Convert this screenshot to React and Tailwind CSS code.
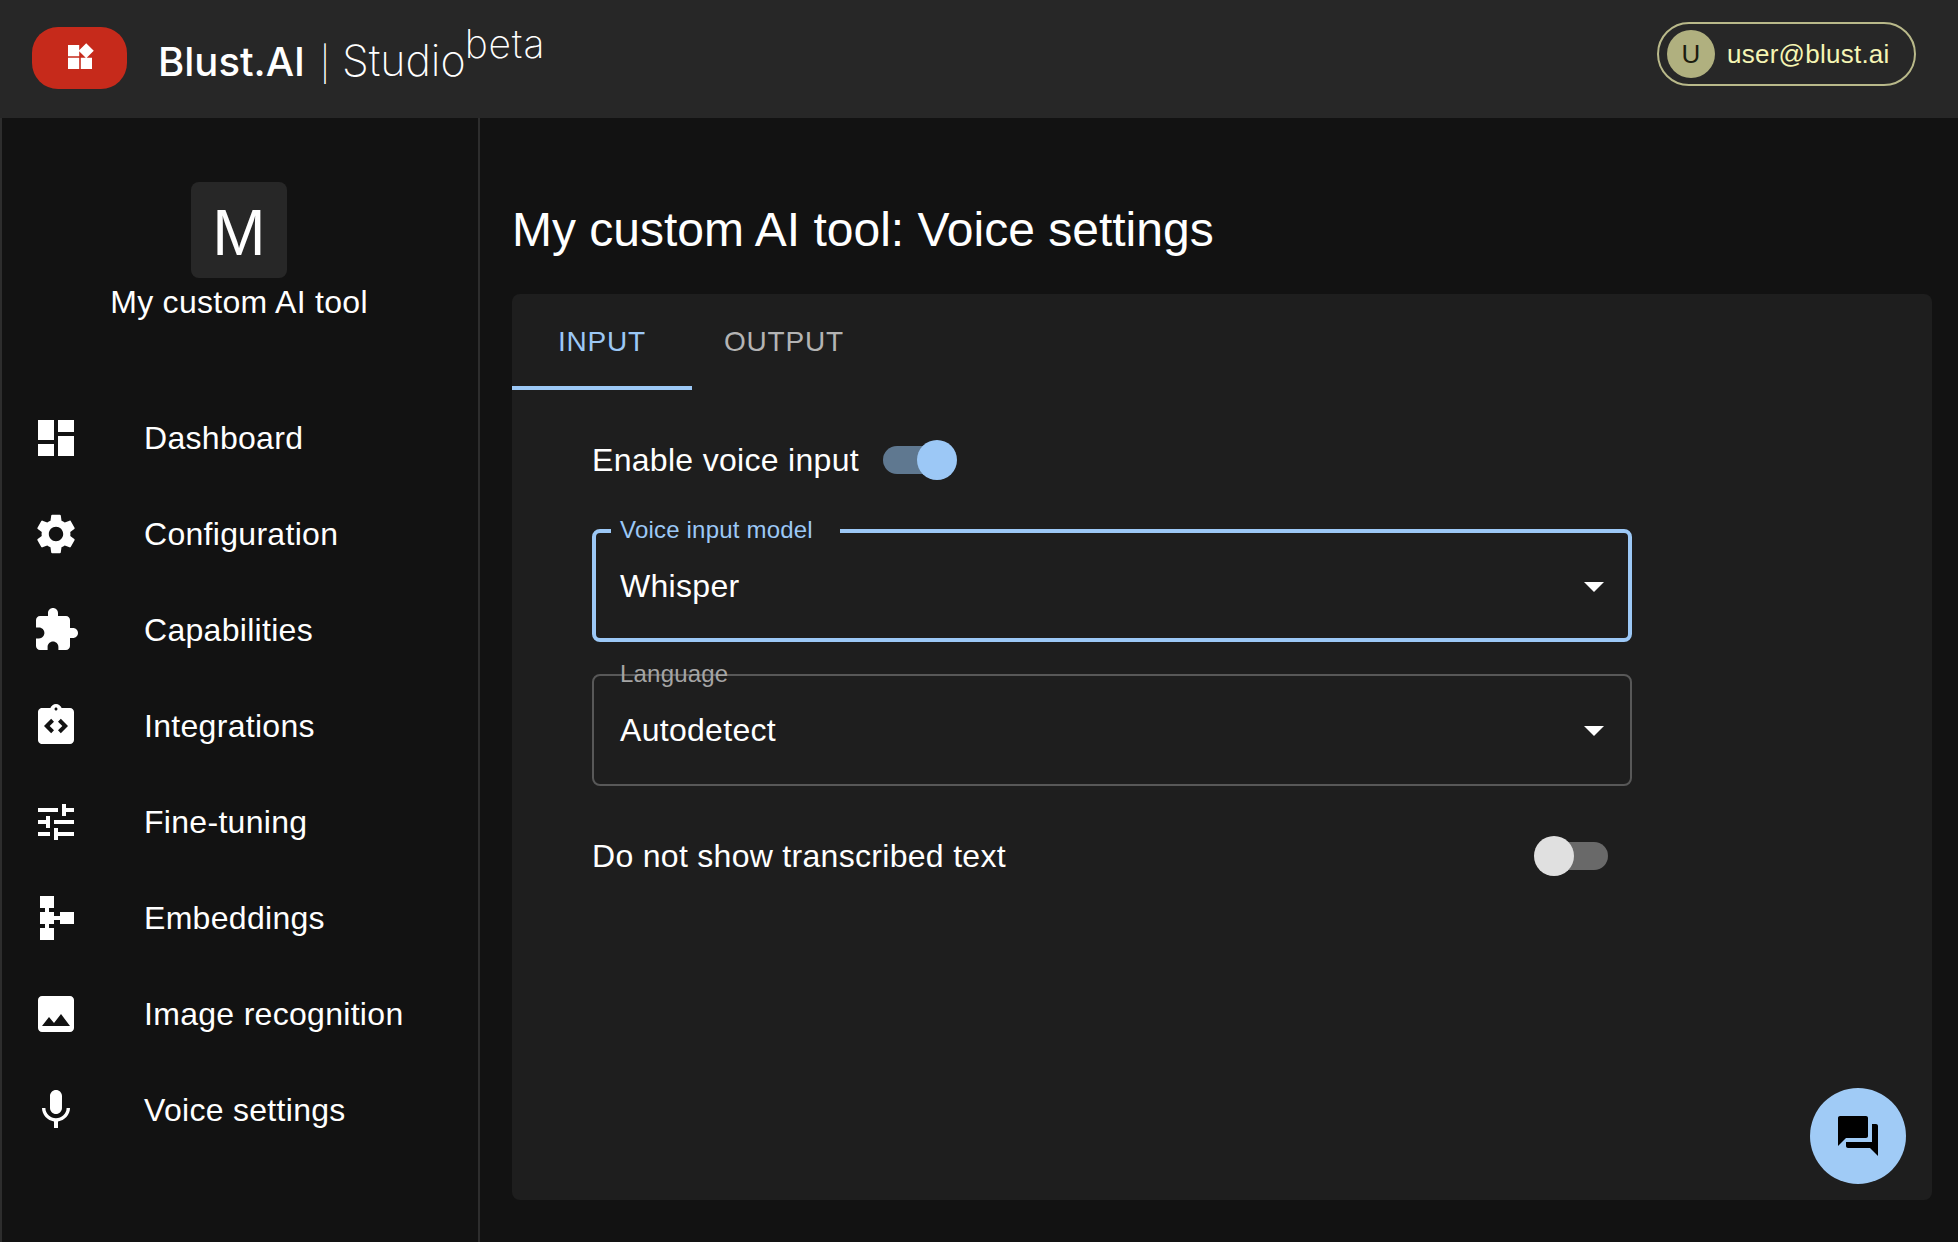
import React from "react";

const navItems = [
  ["Dashboard", "M3 13h8V3H3zm0 8h8v-6H3zm10 0h8V11h-8zm0-18v6h8V3z"],
  ["Configuration", "M19.14 12.94c.04-.3.06-.61.06-.94 0-.32-.02-.64-.07-.94l2.03-1.58c.18-.14.23-.41.12-.61l-1.92-3.32c-.12-.22-.37-.29-.59-.22l-2.39.96c-.5-.38-1.03-.7-1.62-.94l-.36-2.54c-.04-.24-.24-.41-.48-.41h-3.84c-.24 0-.43.17-.47.41l-.36 2.54c-.59.24-1.13.57-1.62.94l-2.39-.96c-.22-.08-.47 0-.59.22L2.74 8.87c-.12.21-.08.47.12.61l2.03 1.58c-.05.3-.09.63-.09.94s.02.64.07.94l-2.03 1.58c-.18.14-.23.41-.12.61l1.92 3.32c.12.22.37.29.59.22l2.39-.96c.5.38 1.03.7 1.62.94l.36 2.54c.05.24.24.41.48.41h3.84c.24 0 .44-.17.47-.41l.36-2.54c.59-.24 1.13-.56 1.62-.94l2.39.96c.22.08.47 0 .59-.22l1.92-3.32c.12-.22.07-.47-.12-.61zM12 15.6c-1.98 0-3.6-1.62-3.6-3.6s1.62-3.6 3.6-3.6 3.6 1.62 3.6 3.6-1.62 3.6-3.6 3.6"],
  ["Capabilities", "M20.5 11H19V7c0-1.1-.9-2-2-2h-4V3.5C13 2.12 11.88 1 10.5 1S8 2.12 8 3.5V5H4c-1.1 0-1.99.9-1.99 2v3.8H3.5c1.49 0 2.7 1.21 2.7 2.7s-1.21 2.7-2.7 2.7H2V20c0 1.1.9 2 2 2h3.8v-1.5c0-1.49 1.21-2.7 2.7-2.7 1.49 0 2.7 1.21 2.7 2.7V22H17c1.1 0 2-.9 2-2v-4h1.5c1.38 0 2.5-1.12 2.5-2.5S21.88 11 20.5 11"],
  ["Integrations", "M19 3h-4.18C14.4 1.84 13.3 1 12 1c-1.3 0-2.4.84-2.82 2H5c-.14 0-.27.01-.4.04-.39.08-.74.28-1.01.55-.18.18-.33.4-.43.64-.1.23-.16.49-.16.77v14c0 .27.06.54.16.78s.25.45.43.64c.27.27.62.47 1.01.55.13.02.26.03.4.03h14c1.1 0 2-.9 2-2V5c0-1.1-.9-2-2-2m-8 11.17-1.41 1.42L6 12l3.59-3.59L11 9.83 8.83 12zm1-9.92c-.41 0-.75-.34-.75-.75s.34-.75.75-.75.75.34.75.75-.34.75-.75.75m2.41 11.34L13 14.17 15.17 12 13 9.83l1.41-1.42L18 12z"],
  ["Fine-tuning", "M3 17v2h6v-2zM3 5v2h10V5zm10 16v-2h8v-2h-8v-2h-2v6zM7 9v2H3v2h4v2h2V9zm14 4v-2H11v2zm-6-4h2V7h4V5h-4V3h-2z"],
  ["Embeddings", "M14 9v2h-3V9H8.5V7H11V1H4v6h2.5v2H4v6h2.5v2H4v6h7v-6H8.5v-2H11v-2h3v2h7V9z"],
  ["Image recognition", "M21 19V5c0-1.1-.9-2-2-2H5c-1.1 0-2 .9-2 2v14c0 1.1.9 2 2 2h14c1.1 0 2-.9 2-2M8.5 13.5l2.5 3.01L14.5 12l4.5 6H5z"],
  ["Voice settings", "M12 14c1.66 0 2.99-1.34 2.99-3L15 5c0-1.66-1.34-3-3-3S9 3.34 9 5v6c0 1.66 1.34 3 3 3m5.3-3c0 3-2.54 5.1-5.3 5.1S6.7 14 6.7 11H5c0 3.41 2.72 6.23 6 6.72V21h2v-3.28c3.28-.48 6-3.3 6-6.72z"],
];

function Icon({ d, className }) {
  return (
    <svg viewBox="0 0 24 24" fill="currentColor" className={className}>
      <path d={d} />
    </svg>
  );
}

function Switch({ on }) {
  return (
    <span className={on ? "relative block h-[76px] w-[116px] shrink-0" : "relative -mr-3 block h-[76px] w-[116px] shrink-0"}>
      <span
        className={
          on
            ? "absolute left-6 top-[24px] h-[28px] w-[68px] rounded-full bg-[#5f7890]"
            : "absolute left-3 top-[24px] h-[28px] w-[68px] rounded-full bg-[#696969]"
        }
      />
      <span
        className={
          on
            ? "absolute left-[58px] top-[18px] h-10 w-10 rounded-full bg-[#9cc8f6]"
            : "absolute left-[6px] top-[18px] h-10 w-10 rounded-full bg-[#e0e0e0]"
        }
      />
    </span>
  );
}

function SelectField({ label, value, focused }) {
  return (
    <div
      className={
        focused
          ? "relative -mt-px flex h-[113px] items-center justify-between rounded-lg border-4 border-[#9cc8f6] pl-6 pr-[10px]"
          : "relative flex h-[112px] items-center justify-between rounded-lg border-2 border-[#585858] pl-[26px] pr-3"
      }
    >
      {focused && <span className="absolute -top-1 left-[15px] h-1 w-[229px] bg-[#1e1e1e]" />}
      <span
        className={
          focused
            ? "absolute -top-[15px] left-6 text-[24px] leading-[24px] tracking-[0.2px] text-[#9cc8f6]"
            : "absolute -top-[14px] left-[26px] text-[24px] leading-[24px] tracking-[0.2px] text-[#a5a5a5]"
        }
      >
        {label}
      </span>
      <span className="text-[32px] leading-[46px] tracking-[0.3px]">{value}</span>
      <Icon d="M7 10l5 5 5-5z" className="h-12 w-12" />
    </div>
  );
}

export default function App() {
  return (
    <div className="relative flex h-[1242px] flex-col overflow-hidden bg-[#121212] font-['Liberation_Sans',sans-serif] text-white">
      <header className="flex h-[118px] shrink-0 items-center justify-between bg-[#272727] pl-8 pr-[42px]">
        <div className="flex items-center">
          <div className="mb-[2px] flex h-[62px] w-[95px] items-center justify-center rounded-[26px] bg-[#c62a1b]">
            <Icon
              d="M12.6 12.6V21H21v-8.4zM3 21h8.4v-8.4H3zM3 3v8.4h8.4V3zm13.66-1.31L11 7.34 16.66 13l5.66-5.66z"
              className="mb-[2px] h-8 w-8"
            />
          </div>
          <div className="ml-[31px] mt-[6px] flex items-baseline font-['Inter',sans-serif]">
            <span className="text-[40px] font-medium leading-[44px]">Blust.AI</span>
            <span className="ml-[15px] text-[34px] font-extralight leading-[44px]">|</span>
            <span className="ml-[12px] text-[43px] font-extralight leading-[44px]">Studio</span>
            <span className="relative -top-[18px] -ml-px text-[39px] font-extralight leading-[44px] tracking-[0.8px]">beta</span>
          </div>
        </div>
        <div className="mb-[10px] flex h-16 w-[259px] items-center rounded-full border-2 border-[#b9b98a] pl-2">
          <span className="flex h-12 w-12 items-center justify-center rounded-full bg-[#b0b07f] text-[26px] text-[#1d1d10]">
            U
          </span>
          <span className="ml-3 text-[26px] leading-8 tracking-[0.25px] text-[#f5f5b4]">user@blust.ai</span>
        </div>
      </header>

      <div className="flex min-h-0 flex-1">
        <aside className="flex w-[480px] shrink-0 flex-col border-x-2 border-[#2d2d2d] pt-16">
          <div className="flex flex-col items-center pr-[2px]">
            <div className="flex h-24 w-24 items-center justify-center rounded-lg bg-[#272727] pt-[6px] text-[64px]">M</div>
            <div className="text-[32px] leading-[48px] tracking-[0.3px]">My custom AI tool</div>
          </div>
          <nav className="mt-16">
            {navItems.map(([label, d]) => (
              <div key={label} className="flex h-24 items-center pl-[30px]">
                <Icon d={d} className="h-12 w-12 shrink-0" />
                <span className="ml-[64px] text-[32px] leading-[46px] tracking-[0.3px]">{label}</span>
              </div>
            ))}
          </nav>
        </aside>

        <main className="flex min-w-0 flex-1 flex-col pb-[42px] pl-8 pr-[26px]">
          <h1 className="mt-[84px] text-[48px] leading-[56px]">My custom AI tool: Voice settings</h1>
          <section className="mt-9 flex-1 rounded-lg bg-[#1e1e1e]">
            <div className="flex h-24">
              <div className="flex min-w-[180px] items-center justify-center border-b-4 border-[#9cc8f6] px-8 pt-1 text-[28px] tracking-[0.8px] text-[#9cc8f6]">
                INPUT
              </div>
              <div className="flex min-w-[180px] items-center justify-center px-8 text-[28px] tracking-[0.8px] text-[#b4b4b4]">
                OUTPUT
              </div>
            </div>
            <div className="ml-20 flex w-[1040px] flex-col gap-8 pt-8">
              <div className="flex h-[76px] items-center">
                <span className="text-[32px] tracking-[0.3px]">Enable voice input</span>
                <Switch on />
              </div>
              <SelectField label="Voice input model" value="Whisper" focused />
              <SelectField label="Language" value="Autodetect" />
              <div className="flex h-[76px] items-center justify-between">
                <span className="text-[32px] tracking-[0.3px]">Do not show transcribed text</span>
                <Switch />
              </div>
            </div>
          </section>
        </main>
      </div>

      <button className="absolute bottom-[58px] right-[52px] flex h-24 w-24 items-center justify-center rounded-full bg-[#a0cbf6] text-black">
        <Icon
          d="M21 6h-2v9H6v2c0 .55.45 1 1 1h11l4 4V7c0-.55-.45-1-1-1m-4 6V3c0-.55-.45-1-1-1H3c-.55 0-1 .45-1 1v14l4-4h10c.55 0 1-.45 1-1"
          className="h-12 w-12"
        />
      </button>
    </div>
  );
}
